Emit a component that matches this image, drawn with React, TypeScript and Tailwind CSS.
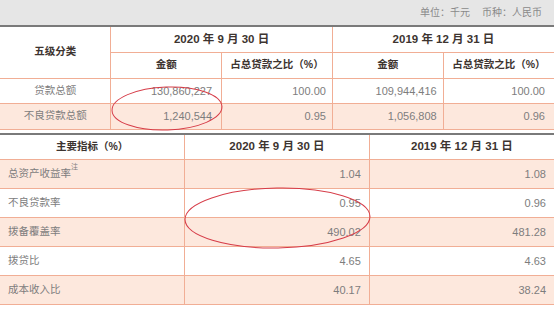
import React from 'react';

const loans = [
  { label: '贷款总额', a: '130,860,227', b: '100.00', c: '109,944,416', d: '100.00', shaded: false },
  { label: '不良贷款总额', a: '1,240,544', b: '0.95', c: '1,056,808', d: '0.96', shaded: true },
];

const ratios = [
  { label: '总资产收益率', note: true, a: '1.04', b: '1.08', shaded: true },
  { label: '不良贷款率', a: '0.95', b: '0.96', shaded: false },
  { label: '拨备覆盖率', a: '490.02', b: '481.28', shaded: true },
  { label: '拨贷比', a: '4.65', b: '4.63', shaded: false },
  { label: '成本收入比', a: '40.17', b: '38.24', shaded: true },
];

export default function App() {
  return (
    <div
      className="relative w-[554px] h-[309px] overflow-hidden bg-white text-[#7d7d7d]"
      style={{ fontFamily: '"Liberation Sans", "Noto Sans CJK SC", sans-serif' }}
    >
      {/* Unit bar */}
      <div className="h-[27px] bg-[#e6e6e6] border-b-2 border-[#7a7a7a] flex items-center justify-end pr-3 text-[10px] text-[#8a8a8a]">
        <span>单位：千元</span>
        <span className="ml-3">币种：人民币</span>
      </div>

      {/* Five-category table */}
      <table className="w-full table-fixed border-collapse text-[10.5px]">
        <thead className="text-[#3d3430] font-bold">
          <tr className="h-[25px]">
            <th rowSpan={2} className="border-b border-r border-[#f1ae95] text-[10.5px]">五级分类</th>
            <th colSpan={2} className="border-b border-r border-[#f1ae95] text-[11.5px]">2020 年 9 月 30 日</th>
            <th colSpan={2} className="border-b border-[#f1ae95] text-[11.5px]">2019 年 12 月 31 日</th>
          </tr>
          <tr className="h-[26px]">
            <th className="border-b border-r border-[#f1ae95]">金额</th>
            <th className="border-b border-r border-[#f1ae95]">占总贷款之比（%）</th>
            <th className="border-b border-r border-[#f1ae95]">金额</th>
            <th className="border-b border-[#f1ae95]">占总贷款之比（%）</th>
          </tr>
        </thead>
        <tbody className="text-[11px]">
          {loans.map((r) => (
            <tr key={r.label} className={`h-[25.5px] ${r.shaded ? 'bg-[#fde8dd]' : ''}`}>
              <td className="border-b border-r border-[#f1ae95] text-center text-[10.5px]">{r.label}</td>
              <td className="border-b border-r border-[#f1ae95] text-right pr-[9px]">{r.a}</td>
              <td className="border-b border-r border-[#f1ae95] text-right pr-[6px]">{r.b}</td>
              <td className="border-b border-r border-[#f1ae95] text-right pr-[6px]">{r.c}</td>
              <td className="border-b border-[#f1ae95] text-right pr-[9px]">{r.d}</td>
            </tr>
          ))}
        </tbody>
      </table>

      <div className="h-[3px]" />

      {/* Key indicators table */}
      <table className="w-full table-fixed border-collapse border-t-2 border-[#7a7a7a] text-[11px]">
        <thead className="text-[#3d3430] font-bold">
          <tr className="h-[26px]">
            <th className="border-b border-r border-[#f1ae95] text-[10.5px]">主要指标（%）</th>
            <th className="border-b border-r border-[#f1ae95] text-[11.5px]">2020 年 9 月 30 日</th>
            <th className="border-b border-[#f1ae95] text-[11.5px]">2019 年 12 月 31 日</th>
          </tr>
        </thead>
        <tbody>
          {ratios.map((r) => (
            <tr key={r.label} className={`h-[29px] ${r.shaded ? 'bg-[#fde8dd]' : ''}`}>
              <td className="border-b border-r border-[#f1ae95] pl-2 text-[10.5px]">
                {r.label}
                {r.note && <sup className="text-[7px] align-super">注</sup>}
              </td>
              <td className="border-b border-r border-[#f1ae95] text-right pr-2">{r.a}</td>
              <td className="border-b border-[#f1ae95] text-right pr-2">{r.b}</td>
            </tr>
          ))}
        </tbody>
      </table>

      {/* Hand-drawn marks */}
      <svg className="absolute inset-0 pointer-events-none" width="554" height="309" viewBox="0 0 554 309">
        <ellipse cx="167" cy="108.5" rx="55" ry="21.5" fill="none" stroke="#d63c48" strokeWidth="1" transform="rotate(-2 167 108.5)" />
        <ellipse cx="277.5" cy="218" rx="92.5" ry="30" fill="none" stroke="#d63c48" strokeWidth="1" transform="rotate(-1 277.5 218)" />
      </svg>
    </div>
  );
}
